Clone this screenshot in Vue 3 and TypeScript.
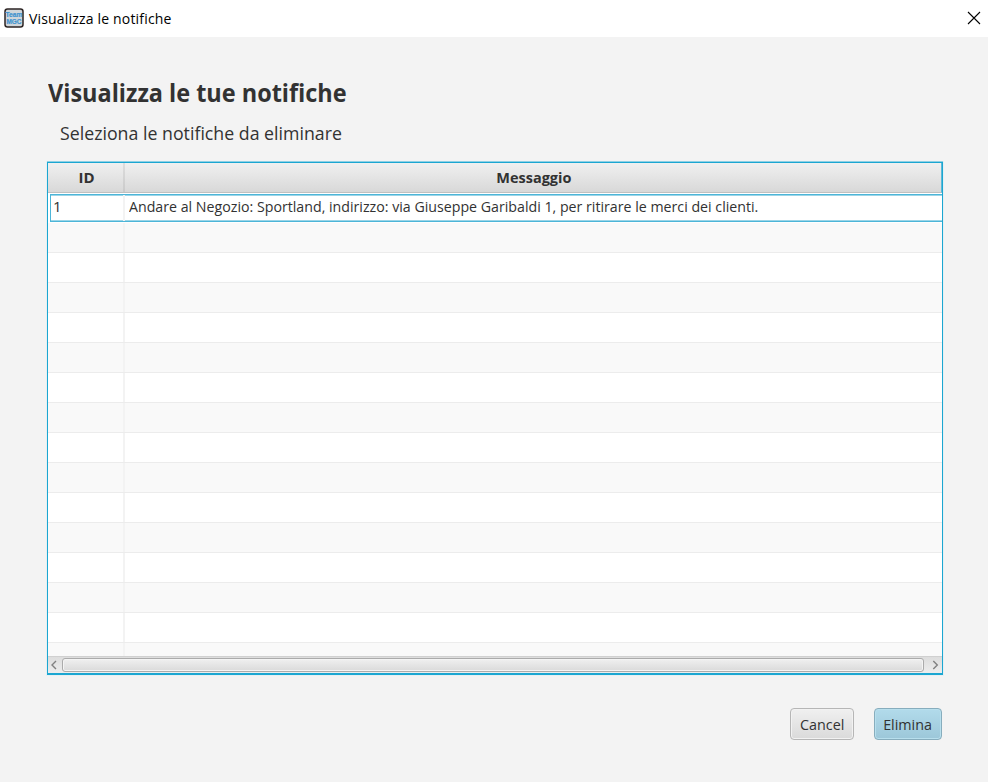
<script setup lang="ts">
interface Notifica {
  id: number
  messaggio: string
}

const notifiche: Notifica[] = [
  {
    id: 1,
    messaggio:
      'Andare al Negozio: Sportland, indirizzo: via Giuseppe Garibaldi 1, per ritirare le merci dei clienti.',
  },
]
const emptyRows = 15
</script>

<template>
  <div class="window">
    <header class="titlebar">
      <svg class="logo" width="20" height="20" viewBox="0 0 20 20">
        <rect x="1" y="1" width="18" height="18" rx="2.5" fill="#d0d6da" stroke="#2d2524" stroke-width="1.5" />
        <text x="10" y="9" text-anchor="middle" textLength="17" lengthAdjust="spacingAndGlyphs">Team</text>
        <text x="10" y="16.2" text-anchor="middle" textLength="15" lengthAdjust="spacingAndGlyphs">MGC</text>
      </svg>
      <span class="caption">Visualizza le notifiche</span>
      <svg class="close" width="14" height="14" viewBox="0 0 14 14">
        <path d="M1 1L13 13M13 1L1 13" stroke="#000" stroke-width="1.1" />
      </svg>
    </header>

    <main class="content">
      <h1><span>Visualizza le tue notifiche</span></h1>
      <p class="hint"><span>Seleziona le notifiche da eliminare</span></p>

      <section class="table">
        <div class="thead">
          <div class="th id">ID</div>
          <div class="th msg"><span>Messaggio</span></div>
        </div>
        <div class="tbody">
          <div v-for="n in notifiche" :key="n.id" class="row focused">
            <div class="cell id">{{ n.id }}</div>
            <div class="cell msg"><span>{{ n.messaggio }}</span></div>
          </div>
          <div v-for="i in emptyRows" :key="i" class="row" :class="{ odd: i % 2 === 1 }">
            <div class="cell id"></div>
            <div class="cell msg"></div>
          </div>
        </div>
        <div class="scrollbar">
          <svg width="14" height="16" viewBox="0 0 14 16">
            <path d="M8 4L4 8L8 12" fill="none" stroke="#808080" stroke-width="1.4" />
          </svg>
          <div class="thumb"></div>
          <svg width="18" height="16" viewBox="0 0 18 16">
            <path d="M9.3 4L13.3 8L9.3 12" fill="none" stroke="#808080" stroke-width="1.4" />
          </svg>
        </div>
      </section>

      <div class="actions">
        <button class="cancel"><span>Cancel</span></button>
        <button class="primary"><span>Elimina</span></button>
      </div>
    </main>
  </div>
</template>

<style>
body {
  margin: 0;
  background: #f3f3f3;
}
</style>

<style scoped>
.window {
  width: 988px;
  height: 782px;
  overflow: hidden;
  background: #f3f3f3;
  color: #323232;
  font-family: 'Open Sans', 'Noto Sans', sans-serif;
  font-size: 15px;
}
.titlebar {
  display: flex;
  align-items: center;
  box-sizing: border-box;
  height: 37px;
  padding: 0 7px 1px 4px;
  background: #fff;
}
.logo text {
  font: bold 7px 'Liberation Sans', sans-serif;
  fill: #3e93cf;
  stroke: #3e93cf;
  stroke-width: 0.2px;
}
.caption {
  margin-left: 5px;
  color: #000;
  font-size: 14px;
  letter-spacing: 0.18px;
}
.close {
  margin-left: auto;
}
.content {
  padding: 37px 45px 0 47px;
}
h1 span,
.hint span,
.msg span,
button span {
  display: inline-block;
  transform-origin: 0 50%;
}
h1 {
  margin: 0 0 0 1px;
  font-size: 25px;
  line-height: 36px;
  font-weight: 700;
}
h1 span {
  transform: scaleX(0.938);
}
.hint {
  margin: 9px 0 0 13px;
  font-size: 19px;
  line-height: 28px;
}
.hint span {
  transform: scaleX(0.934);
}
.table {
  display: flex;
  flex-direction: column;
  box-sizing: border-box;
  width: 896px;
  height: 513px;
  margin-top: 15px;
  border: 1px solid #1ba6d1;
  border-bottom-width: 2px;
  background: #fff;
  box-shadow: 0 -1px #8fd0e4, 0 0 0 1px #e6f0f3;
}
.thead {
  display: flex;
  height: 30px;
  flex: none;
  box-sizing: border-box;
  border-bottom: 1px solid #c0c0c0;
  border-right: 1px solid #5db9d8;
  background: linear-gradient(#f0f0f0, #d8d8d8);
}
.th {
  box-sizing: border-box;
  line-height: 29px;
  text-align: center;
  font-weight: 700;
}
.id {
  flex: none;
  width: 77px;
}
.th.id {
  padding-left: 2px;
  border-right: 2px solid;
  border-image: linear-gradient(#dedede, #c9c9c9) 1;
  border-left: 0;
  border-top: 0;
  border-bottom: 0;
}
.th.msg span {
  transform: scaleX(0.965);
  transform-origin: 50% 50%;
  position: relative;
  left: 1px;
}
.msg {
  flex: 1;
}
.tbody {
  flex: 1;
  overflow: hidden;
}
.row {
  display: flex;
  box-sizing: border-box;
  height: 30px;
  border-bottom: 1px solid #ececec;
}
.row.odd {
  background: #f9f9f9;
}
.cell {
  box-sizing: border-box;
  white-space: nowrap;
}
.cell.id {
  border-right: 2px solid #f3f3f3;
}
.row.focused {
  height: 28px;
  margin: 1px 0 1px 2px;
  border: 1px solid #4db5d8;
  border-right: 0;
  box-shadow: inset 0 1px #9bd5e7, inset 0 -1px #9bd5e7;
  line-height: 23px;
}
.focused .id {
  width: 74px;
  padding-left: 2px;
}
.focused .msg {
  padding-left: 4px;
}
.focused .msg span {
  transform: scaleX(0.946);
}
.scrollbar {
  display: flex;
  align-items: center;
  flex: none;
  height: 17px;
  box-sizing: border-box;
  border-top: 1px solid #d0d0d0;
  background: linear-gradient(#dddddd, #ededed);
}
.thumb {
  flex: 1;
  box-sizing: border-box;
  height: 14px;
  border: 1px solid #ababab;
  border-radius: 3px;
  background: linear-gradient(#f0f0f0, #dadada);
  box-shadow: inset 0 0 0 1px #f4f4f4;
}
.actions {
  display: flex;
  justify-content: flex-end;
  gap: 20px;
  margin: 33px 1px 0 0;
}
button {
  box-sizing: border-box;
  height: 32px;
  padding: 0;
  border: 1px solid #b6b6b6;
  border-radius: 4px;
  color: #323232;
  font: inherit;
  line-height: 30px;
}
button span {
  transform: scaleX(0.955);
  transform-origin: 50% 50%;
}
.cancel {
  width: 64px;
  background: linear-gradient(#f0f0f0, #dadada);
  box-shadow: inset 0 0 0 1px #f2f2f2;
}
.primary {
  width: 68px;
  border-color: #87adbd;
  background: linear-gradient(#b2dbeb, #9cc7d9);
  box-shadow: inset 0 0 0 1px #b8dfed;
}
</style>
